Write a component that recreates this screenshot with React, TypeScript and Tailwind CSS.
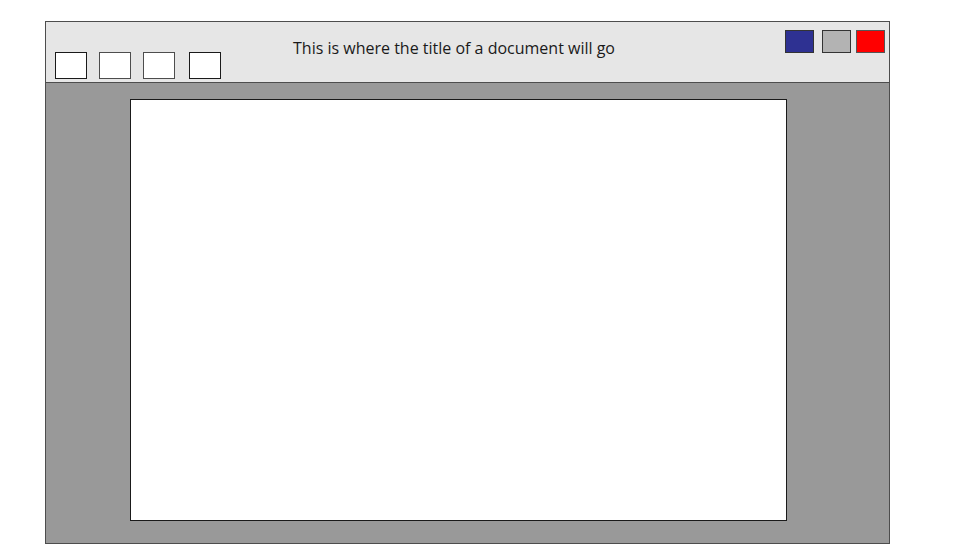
export default function App() {
  return (
    <div className="w-[960px] h-[560px] bg-white pt-[21px] pl-[45px]" style={{ fontFamily: '"Open Sans", "Liberation Sans", sans-serif' }}>
      <div className="w-[845px] h-[523px] border border-[#4d4d4d] flex flex-col">
        {/* title bar */}
        <div className="h-[61px] bg-[#e6e6e6] border-b border-[#4d4d4d] flex shrink-0">
          <div className="self-end flex pl-[9px] pb-[3px]">
            <div className="w-[32px] h-[27px] bg-white border border-[#1a1a1a]" />
            <div className="w-[32px] h-[27px] bg-white border border-[#4d4d4d] ml-[12px]" />
            <div className="w-[32px] h-[27px] bg-white border border-[#4d4d4d] ml-[12px]" />
            <div className="w-[32px] h-[27px] bg-white border border-[#1a1a1a] ml-[14px]" />
          </div>
          <div className="ml-[72px] pt-[14px] text-[16px] leading-[24px] text-[#1a1a1a]">
            This is where the title of a document will go
          </div>
          <div className="ml-auto flex pt-[8px] pr-[4px]">
            <div className="w-[29px] h-[23px] bg-[#2e3192] border border-[#333]" />
            <div className="w-[29px] h-[23px] bg-[#b3b3b3] border border-[#333] ml-[8px]" />
            <div className="w-[29px] h-[23px] bg-[#ff0000] border border-[#555] ml-[5px]" />
          </div>
        </div>
        {/* content */}
        <div className="flex-1 bg-[#999999] pt-[16px] pl-[84px]">
          <div className="w-[657px] h-[422px] bg-white border border-[#1a1a1a]" />
        </div>
      </div>
    </div>
  );
}
